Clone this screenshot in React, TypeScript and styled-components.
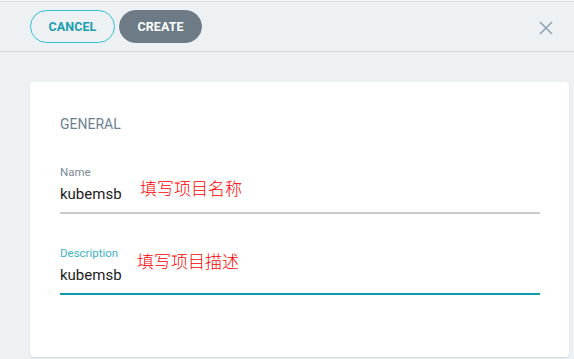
import React from "react";
import styled, { createGlobalStyle } from "styled-components";

const Global = createGlobalStyle`
  html, body { margin: 0; padding: 0; background: #eef1f4; }
  body { font-family: Roboto, "Noto Sans", sans-serif; overflow: hidden; }
  * { box-sizing: border-box; }
`;

const Page = styled.div`
  width: 574px;
  height: 359px;
  background: #eef1f4;
  border-top: 1px solid #f6f7f8;
  display: flex;
  flex-direction: column;
`;

const Header = styled.div`
  height: 51px;
  border-top: 1px solid #d9dcdf;
  border-bottom: 1px solid #d3d7db;
  display: flex;
  align-items: center;
  padding: 0 20px 0 30px;
  gap: 4px;
`;

const Button = styled.button<{ $primary?: boolean }>`
  height: 33px;
  border-radius: 17px;
  padding: 0;
  width: ${(p) => (p.$primary ? "83px" : "85px")};
  font-family: Roboto, sans-serif;
  font-size: 12.5px;
  font-weight: 700;
  letter-spacing: 0.1px;
  cursor: pointer;
  border: 1px solid ${(p) => (p.$primary ? "#6c7b86" : "#2ec0d3")};
  background: ${(p) => (p.$primary ? "#6c7b86" : "transparent")};
  color: ${(p) => (p.$primary ? "#ffffff" : "#1a9db1")};
`;

const Spacer = styled.div`
  flex: 1;
`;

const Close = styled.button`
  border: none;
  background: transparent;
  padding: 0;
  width: 16px;
  height: 16px;
  display: flex;
  align-items: center;
  justify-content: center;
  cursor: pointer;
  margin-top: 2px;
`;

const Body = styled.div`
  flex: 1;
  padding: 30px 5px 0 30px;
`;

const Card = styled.div`
  background: #ffffff;
  border-radius: 4px;
  box-shadow: 0 1px 2px rgba(0, 0, 0, 0.12);
  height: 275px;
  padding: 34px 29px 0 30px;
`;

const SectionTitle = styled.div`
  font-size: 14px;
  color: #6e8193;
  line-height: 16px;
  margin-bottom: 34px;
`;

const Field = styled.div<{ $active?: boolean }>`
  position: relative;
  border-bottom: 2px solid ${(p) => (p.$active ? "#0f9aab" : "#cbcbcb")};
  padding-bottom: 9px;
  margin-bottom: 33px;
`;

const Label = styled.div<{ $active?: boolean }>`
  font-size: 11.5px;
  line-height: 13px;
  color: ${(p) => (p.$active ? "#3fb1c5" : "#7c8893")};
  margin-bottom: 6px;
`;

const Value = styled.div`
  font-size: 15px;
  line-height: 18px;
  color: #1c1c1c;
`;

const Note = styled.span<{ $left: number; $top: number }>`
  position: absolute;
  left: ${(p) => p.$left}px;
  top: ${(p) => p.$top}px;
  font-family: "Noto Sans CJK SC", sans-serif;
  font-size: 17px;
  font-weight: 300;
  line-height: 20px;
  color: #ff0000;
`;

export default function App() {
  return (
    <>
      <Global />
      <Page>
        <Header>
          <Button>CANCEL</Button>
          <Button $primary>CREATE</Button>
          <Spacer />
          <Close aria-label="close">
            <svg width="14" height="14" viewBox="0 0 14 14">
              <path d="M1 1 L13 13 M13 1 L1 13" stroke="#8fa3b4" strokeWidth="1.6" fill="none" />
            </svg>
          </Close>
        </Header>
        <Body>
          <Card>
            <SectionTitle>GENERAL</SectionTitle>
            <Field>
              <Label>Name</Label>
              <Value>kubemsb</Value>
              <Note $left={80} $top={12}>填写项目名称</Note>
            </Field>
            <Field $active>
              <Label $active>Description</Label>
              <Value>kubemsb</Value>
              <Note $left={77} $top={4}>填写项目描述</Note>
            </Field>
          </Card>
        </Body>
      </Page>
    </>
  );
}
